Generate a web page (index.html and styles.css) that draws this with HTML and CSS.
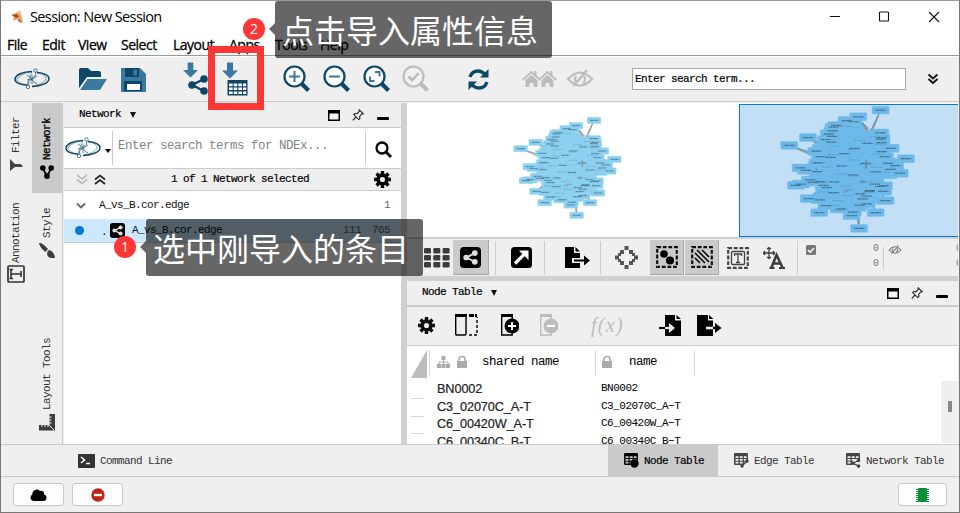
FILE: index.html
```html
<!DOCTYPE html>
<html lang="zh-CN">
<head>
<meta charset="utf-8">
<title>Session: New Session</title>
<link rel="stylesheet" href="styles.css">
</head>
<body>
<svg class="defs" width="0" height="0">
  <symbol id="logo" viewBox="0 0 36 22">
    <g fill="none" stroke="#0d4668">
      <path d="M18 3.4C9 3.5 1 7 1 11.500 1 14.500 6 17 13 17" stroke-width="1.500"/>
      <path d="M13 17Q3 15 3 11.500C4 7 12 5 18 3.400Z" stroke-width=".5"/>
      <path d="M23 4.600C30 5 35 7.500 35 10.500 35 15 27 18.500 18 18.400" stroke-width="1.500"/>
      <path d="M23 4.600Q32 7 32 10.500C31 15 24 17 18 18.400" stroke-width=".5"/>
      <circle cx="21.500" cy="2.500" r="1.700" stroke-width=".7"/><circle cx="14" cy="19" r="1.700" stroke-width=".7"/>
      <path d="M21.700 4v3l-4 4-3 3v3M13 7l3 2 5 6 2 1M13 12l5-1 5-3M18 7v9" stroke-width=".7"/>
    </g>
  </symbol>
  <symbol id="lens" viewBox="0 0 28 28">
    <circle cx="11.500" cy="11.500" r="10" fill="var(--lens,#fff)" stroke="currentColor" stroke-width="2.200"/>
    <path d="M19 19l6.500 6.500" stroke="currentColor" stroke-width="4.200"/>
  </symbol>
  <symbol id="down" viewBox="0 0 16 16"><path d="M5 0h6v8h5l-8 8-8-8h5z" fill="#39789f"/></symbol>
  <symbol id="share" viewBox="0 0 20 20">
    <path d="M16 4L4 10l12 6" fill="none" stroke="currentColor" stroke-width="2.500"/>
    <circle cx="16" cy="4" r="3.800"/><circle cx="4" cy="10" r="3.800"/><circle cx="16" cy="16" r="3.800"/>
  </symbol>
  <symbol id="sharebox" viewBox="0 0 22 22">
    <rect width="22" height="22" rx="4"/><path d="M16 6L7 11l9 5" fill="none" stroke="#ddd" stroke-width="2"/>
    <g fill="#ddd"><circle cx="15.500" cy="6.500" r="3"/><circle cx="6.500" cy="11" r="3"/><circle cx="15.500" cy="15.500" r="3"/></g>
  </symbol>
  <symbol id="eye" viewBox="0 0 28 20">
    <path d="M2 10Q14-3 26 10 14 23 2 10zM7.500 17L21 1M10 7a5 5 0 0 0 0 6M18 7a5 5 0 0 1-1 7" fill="none" stroke="currentColor" stroke-width="2.200"/>
  </symbol>
  <symbol id="gear" viewBox="0 0 18 18">
    <path d="M9 0v18M0 9h18M2.700 2.700l12.600 12.600M2.700 15.300L15.300 2.700" stroke="currentColor" stroke-width="3.600"/>
    <circle cx="9" cy="9" r="4.600" fill="none" stroke="currentColor" stroke-width="3.800"/>
    <circle cx="9" cy="9" r="2.700" fill="#efefef"/>
  </symbol>
  <symbol id="max" viewBox="0 0 12 11"><path d="M0 0h12v11H0z"/><path d="M1.500 3.500h9v6h-9z" fill="#f4f4f4"/></symbol>
  <symbol id="pin" viewBox="0 0 12 12"><path d="M7.300.8l4 4-1.600.2-2 2.200.2 2.300-1.200 1.100-5-5 1.200-1 2.200.1L7.200 2.500zM4.200 8L.7 11.400" fill="none" stroke="#222" stroke-width="1.100"/></symbol>
  <symbol id="lock" viewBox="0 0 10 12"><path d="M0 5h10v7H0z"/><path d="M2 6V3.500a3 3 0 0 1 6 0V6" fill="none" stroke="#aaa" stroke-width="1.700"/></symbol>
  <symbol id="table" viewBox="0 0 14 12"><rect width="14" height="12" rx="1.200"/><path d="M1.500 3.200h3v1.800h-3zM5.700 3.200h3v1.800h-3zM9.900 3.200h2.700v1.800H9.900zM1.500 6h3v1.800h-3zM5.700 6h3v1.800h-3zM9.900 6h2.700v1.800H9.900zM1.500 8.800h3v1.800h-3zM5.700 8.800h3v1.800h-3zM9.900 8.800h2.700v1.800H9.900z" fill="var(--cell,#efefef)"/></symbol>
  <symbol id="dashbox" viewBox="0 0 22 22"><path d="M1.200 1.200h19.600v19.600H1.200z" fill="none" stroke="currentColor" stroke-width="2.200" stroke-dasharray="3.800 1.800"/></symbol>
</svg>

<div class="window">
  <header class="titlebar">
    <svg width="13" height="14" viewBox="0 0 13 14"><path d="M1 5l5-2 4-3 1 5 2 8-4-2-2-2-4 2 1-4z" fill="#e8a05c"/><path d="M2 5l5-1 2 3-3 1zM9 9l3 4-4-2z" fill="#a34e2d"/><path d="M7 3l3-2v4z" fill="#f5cf92"/></svg>
    <span class="title">Session: New Session</span>
    <svg class="controls" width="114" height="14" viewBox="0 0 114 14" fill="none" stroke="#111" stroke-width="1.100"><path d="M0 6.500h10M99 2l10 10M109 2L99 12"/><rect x="49.500" y="2" width="9" height="9" rx=".6"/></svg>
  </header>
  <nav class="menu"><span>File</span><span>Edit</span><span>View</span><span>Select</span><span>Layout</span><span>Apps</span><span>Tools</span><span>Help</span></nav>

  <div class="toolbar">
    <svg width="36" height="22"><use href="#logo"/></svg>
    <svg width="28" height="22" viewBox="0 0 28 22"><path d="M0 20V2q0-2 2-2h7l3 3h8q2 0 2 2v4H8z" fill="#0d4668"/><path d="M8.500 11H28l-6 9.500Q21 22 19.500 22H1z" fill="#39789f"/></svg>
    <svg width="25" height="25" viewBox="0 0 25 25"><path d="M0 1h19l6 6v18H1q-1 0-1-1z" fill="#39789f"/><path d="M4 1h14v9H4zM3 14h18v10H3z" fill="#0d4668"/><path d="M12.500 2.500h3.500v6h-3.500z" fill="#39789f"/><path d="M6 17h13v6H6z" fill="#fff"/></svg>
    <svg width="25" height="34" viewBox="0 0 25 34"><use href="#down" x="0" y="0" width="15" height="16"/><g fill="#0d4668" color="#0d4668"><use href="#share" x="5" y="13" width="20" height="20"/></g></svg>
    <svg width="26" height="34" viewBox="0 0 26 34"><use href="#down" x="0" y="0" width="16" height="17"/><path d="M5.500 18h20v15.500h-20z" fill="#0d4668"/><path d="M7 21.500h3.600v2.800H7zM11.700 21.500h3.600v2.800h-3.600zM16.400 21.500h3.600v2.800h-3.600zM21 21.500h3.200v2.800H21zM7 25.500h3.600v2.600H7zM11.700 25.500h3.600v2.600h-3.600zM16.400 25.500h3.600v2.600h-3.600zM21 25.500h3.200v2.600H21zM7 29.400h3.600V32H7zM11.700 29.400h3.600V32h-3.600zM16.400 29.400h3.600V32h-3.600zM21 29.400h3.200V32H21z" fill="#fff"/></svg>
    <svg class="navy" width="28" height="28"><use href="#lens"/><path d="M6 11.500h11M11.500 6v11" stroke="#39789f" stroke-width="2"/></svg>
    <svg class="navy" width="28" height="28"><use href="#lens"/><path d="M6 11.500h11" stroke="#39789f" stroke-width="2"/></svg>
    <svg class="navy" width="28" height="28"><use href="#lens"/><path d="M12 7h4.500v4.500M7 11.500V16h4.500" fill="none" stroke="#39789f" stroke-width="1.900"/></svg>
    <svg class="faded" width="28" height="28"><use href="#lens"/><path d="M6.500 11.500l3.700 3.700 6.500-7" fill="none" stroke="#bdbdbd" stroke-width="2.600"/></svg>
    <svg width="21" height="21" viewBox="0 0 21 21" fill="none" stroke="#0d4668" stroke-width="3.300"><path d="M2 8Q4 2 10 2q4 0 7.500 4M19 13q-2 6-8 6-4.500 0-7.500-4"/><path d="M20.500 0v8.500H12zM.5 21v-8.500H9z" fill="#0d4668" stroke="none"/></svg>
    <svg width="35" height="18" viewBox="0 0 35 18" fill="none" stroke="#bdbdbd" stroke-width="2"><path d="M.7 10L9.500 2l8 7.500 8-7.500 8.800 8M13.500 1v4M29.500 1v4"/><path d="M3.500 10.300l6-5.500 6 5.500V17h-4v-4h-4v4h-4zM19.500 10.300l6-5.500 6 5.500V17h-4v-4h-4v4h-4z" fill="#bdbdbd" stroke="none"/></svg>
    <svg class="faded" width="28" height="20"><use href="#eye"/></svg>
    <div class="search">Enter search term...</div>
    <svg width="12" height="12" viewBox="0 0 12 12" fill="none" stroke="#111" stroke-width="1.800"><path d="M1.500 1.500L6 5.500l4.500-4M1.500 6L6 10l4.500-4"/></svg>
  </div>

  <main class="main">
    <aside class="rail">
      <div class="rail-a">
        <div class="vtab filter"><span>Filter</span><svg width="13" height="13" viewBox="0 0 13 13" fill="#444"><path d="M0 0v12l5-4h8L11 5H5z"/></svg></div>
        <div class="vtab annot"><span>Annotation</span><svg width="18" height="18" viewBox="0 0 18 18" fill="none" stroke="#333"><rect x="1" y="1" width="16" height="16" rx="1" stroke-width="1.700"/><path d="M4 4v10M4 9h10M14 6v6M2.500 4.500H6M2.500 13.500H6" stroke-width="1.600"/></svg></div>
      </div>
      <div class="rail-b">
        <div class="vtab network"><span>Network</span><svg width="14" height="14" viewBox="0 0 14 14"><path d="M2.500 3L7 11l4.500-8" fill="none" stroke="#000" stroke-width="1.700"/><circle cx="2.800" cy="3" r="2.800"/><circle cx="11.200" cy="3" r="2.800"/><circle cx="7" cy="11" r="2.900"/></svg></div>
        <div class="vtab style"><span>Style</span><svg width="16" height="15" viewBox="0 0 16 15" fill="#3c3c3c"><path d="M0 0q3-1 9 6L6.500 9Q1 5 0 0z"/><path d="M10 7q5 1 6 8-7 1-8-4 0-3 2-4z"/></svg></div>
        <div class="vtab layout"><span>Layout Tools</span><svg width="16" height="17" viewBox="0 0 16 17"><path d="M10.500 0H16v16.500H0V11h10.500z" fill="#3c3c3c"/><path d="M10 3h2.500M10 6h2.500M10 9h2.500M3 10.500V13M6 10.500V13M9 10.500V13M10 11l5 5" stroke="#efefef"/></svg></div>
      </div>
    </aside>

    <section class="netpanel">
      <div class="panel-head"><b>Network</b><i class="caret"></i><svg class="push" width="12" height="11"><use href="#max"/></svg><svg width="12" height="12"><use href="#pin"/></svg><i class="min"></i></div>
      <div class="ndex">
        <svg width="36" height="22"><use href="#logo"/></svg><i class="mini-caret"></i>
        <div class="ndex-input">Enter search terms for NDEx...</div>
        <svg class="glass" width="17" height="17" viewBox="0 0 17 17" fill="none" stroke="#000" stroke-width="2.300"><circle cx="7" cy="7" r="5.500"/><path d="M11 11l5 5" stroke-width="2.800"/></svg>
      </div>
      <div class="selbar">
        <svg width="30" height="11" viewBox="0 0 30 11" fill="none" stroke-width="1.700"><path d="M1 1l5 4 5-4M1 5.500l5 4 5-4" stroke="#bbb"/><path d="M19 5.500l5-4 5 4M19 10l5-4 5 4" stroke="#222"/></svg>
        <span>1 of 1 Network selected</span><svg class="gear" width="17" height="17"><use href="#gear"/></svg>
      </div>
      <div class="tree-root"><svg width="10" height="7" viewBox="0 0 10 7"><path d="M1 1.500l4 4 4-4" fill="none" stroke="#666" stroke-width="1.900"/></svg><span>A_vs_B.cor.edge</span><em>1</em></div>
      <div class="tree-item"><i class="dot"></i><span class="tick">.</span><svg width="15" height="15"><use href="#sharebox"/></svg><span class="name">A_vs_B.cor.edge</span><em>111</em><em class="edges">765</em></div>
      <div class="empty"></div>
    </section>

    <section class="right">
      <div class="view">
        <svg class="graph" id="graph" viewBox="30 40 350 325"></svg>
        <div class="birdseye"><svg class="graph-big" id="overview" viewBox="30 40 350 325"></svg></div>
      </div>
      <div class="viewbar">
        <svg width="26" height="20" viewBox="0 0 26 20" fill="#3c3c3c"><g id="gridrow"><rect width="7" height="5.500" rx="1.200"/><rect x="9.300" width="7" height="5.500" rx="1.200"/><rect x="18.600" width="7" height="5.500" rx="1.200"/></g><use href="#gridrow" y="7"/><use href="#gridrow" y="14"/></svg>
        <div class="on first"><svg width="21" height="21"><use href="#sharebox"/></svg></div>
        <i class="sep"></i>
        <svg width="21" height="21" viewBox="0 0 21 21"><rect width="21" height="21" rx="3.500"/><path d="M4 16.500L14 6.500" stroke="#fff" stroke-width="3.200"/><path d="M8 3.500h9.500V13z" fill="#fff"/></svg>
        <i class="sep"></i>
        <svg class="export" width="25" height="21" viewBox="0 0 25 21"><path d="M0 0h9v6h6v15H0zM10.500 0L15 4.500h-4.500z"/><path d="M7 13.500h13" stroke="#efefef" stroke-width="5"/><path d="M9 13.500h11" stroke="#000" stroke-width="2"/><path d="M19 8.500l6 5-6 5z"/></svg>
        <i class="sep"></i>
        <svg class="diamond" width="23" height="23" viewBox="0 0 23 23" fill="#555"><path d="M9.500 0h4v4h-4zM9.500 19h4v4h-4zM0 9.500h4v4H0zM19 9.500h4v4h-4zM5 4h4v4H5zM14 4h4v4h-4zM5 15h4v4H5zM14 15h4v4h-4zM3 7h3v3H3zM17 7h3v3h-3zM3 13h3v3H3zM17 13h3v3h-3z"/></svg>
        <div class="on"><svg width="22" height="22"><use href="#dashbox"/><circle cx="8" cy="8" r="3.800"/><circle cx="14" cy="14.500" r="4"/></svg></div>
        <div class="on"><svg width="22" height="22"><use href="#dashbox"/><path d="M4 7l10 10M6 4l12 12M11 4l7 7M4 12l5 5" stroke="#000" stroke-width="1.500"/></svg></div>
        <svg class="grey" width="22" height="22"><use href="#dashbox"/><rect x="4.500" y="4.500" width="13" height="13" rx="1" fill="none" stroke="#444" stroke-width="1.300"/><path d="M7.500 9V7h7v2M11 7v8.500M9 15.500h4" fill="none" stroke="#444" stroke-width="1.300"/></svg>
        <svg width="22" height="22" viewBox="0 0 22 22" fill="none" stroke="#3c3c3c"><path d="M6 0v12M0 6h12M4 2l2-1.500L8 2M4 10l2 1.500L8 10M2 4L.5 6 2 8M10 4l1.500 2L10 8" stroke-width="1.300"/><path d="M8.500 20.500L13.500 8l6 12.500M10.500 16.500h7" stroke-width="2.600"/><path d="M6.500 21h5M16 21h6" stroke-width="2"/></svg>
        <i class="sep"></i>
        <svg class="check" width="10" height="10" viewBox="0 0 10 10"><rect width="10" height="10" rx="1.500" fill="#777"/><path d="M2 5l2.200 2.200L8 3" fill="none" stroke="#fff" stroke-width="1.500"/></svg>
        <div class="counts"><span>0</span><span>0</span></div>
        <i class="sep short"></i>
        <svg class="hidden-eye" width="14" height="10"><use href="#eye"/></svg>
        <div class="counts cut"><span>0</span><span>0</span></div>
      </div>
      <div class="panel-head tablehead"><b>Node Table</b><i class="caret"></i><svg class="push" width="12" height="11"><use href="#max"/></svg><svg width="12" height="12"><use href="#pin"/></svg><i class="min"></i></div>
      <div class="tablebar">
        <svg width="17" height="17"><use href="#gear"/></svg>
        <svg width="23" height="22" viewBox="0 0 23 22" fill="none" stroke="#000"><rect x=".7" y=".7" width="10.300" height="20.300" rx="1" stroke-width="1.400"/><path d="M0 1.500h22" stroke-width="3" stroke-dasharray="12 2 5 1"/><path d="M14 21h8V3" stroke-width="1.400" stroke-dasharray="3 2"/></svg>
        <svg width="18" height="22" viewBox="0 0 18 22"><path d="M.7.7h10.500V21H.7z" fill="none" stroke="#000" stroke-width="1.400"/><path d="M0 0h12v3H0z"/><circle cx="11" cy="12" r="7.500"/><path d="M7 12h8M11 8v8" stroke="#fff" stroke-width="1.900"/></svg>
        <svg width="18" height="22" viewBox="0 0 18 22" fill="#bdbdbd"><path d="M.7.7h10.500V21H.7z" fill="none" stroke="#bdbdbd" stroke-width="1.400"/><path d="M0 0h12v3H0z"/><circle cx="11" cy="12" r="7.500"/><path d="M7 12h8" stroke="#fff" stroke-width="1.900"/></svg>
        <span class="fx">f(x)</span>
        <svg width="22" height="21" viewBox="0 0 22 21"><path d="M6 0h10v5.500h6V21H6zM17.500 0L22 4h-4.500z"/><path d="M6 13h5" stroke="#efefef" stroke-width="2.200"/><path d="M0 13h6" stroke="#000" stroke-width="2.200"/><path d="M10 8l6 5-6 5z" fill="#efefef"/></svg>
        <svg width="25" height="21" viewBox="0 0 25 21"><path d="M0 0h11v5.500h5V21H0zM12 0l4.500 4H12z"/><path d="M9 13h8" stroke="#efefef" stroke-width="2.600"/><path d="M16 13h4" stroke="#000" stroke-width="2.400"/><path d="M18 8l6.500 5-6.500 5z"/></svg>
      </div>
      <div class="table">
        <div class="thead">
          <i class="corner"></i>
          <div class="th shared"><svg width="13" height="12" viewBox="0 0 13 12" fill="#aaa"><path d="M4.500 0h4v4h-4zM0 8h4v4H0zM4.500 8h4v4h-4zM9 8h4v4H9z"/><path d="M6.500 3v6M2 9V6h9v3" fill="none" stroke="#aaa"/></svg><svg class="lock" width="10" height="12"><use href="#lock"/></svg><span>shared name</span></div>
          <div class="th plain"><svg class="lock" width="10" height="12"><use href="#lock"/></svg><span>name</span></div>
        </div>
        <div class="rows">
          <div class="row"><i></i><span>BN0002</span><code>BN0002</code></div>
          <div class="row"><i></i><span>C3_02070C_A-T</span><code>C3_02070C_A−T</code></div>
          <div class="row"><i></i><span>C6_00420W_A-T</span><code>C6_00420W_A−T</code></div>
          <div class="row"><i></i><span>C6_00340C_B-T</span><code>C6_00340C_B−T</code></div>
        </div>
        <div class="scroll"><i></i></div>
      </div>
    </section>
  </main>

  <div class="dock">
    <div class="dtab cmd"><svg width="17" height="14" viewBox="0 0 17 14"><rect width="17" height="14" rx=".8" fill="#333"/><path d="M3 3l3.500 3L3 9M8 9.500h4" fill="none" stroke="#fff" stroke-width="1.500"/></svg><span>Command Line</span></div>
    <div class="dtab node"><svg width="15" height="15" viewBox="0 0 15 15"><use href="#table" width="14" height="12"/><circle cx="10.500" cy="10.500" r="4.200"/></svg><b>Node Table</b></div>
    <div class="dtab edge-tab"><svg width="15" height="15" viewBox="0 0 15 15" fill="#444"><use href="#table" width="14" height="12"/><path d="M6 15L15 6v9z" fill="#efefef"/><path d="M8 13l5-5" stroke="#444" stroke-width="1.500"/><circle cx="8" cy="13" r="1.700"/><circle cx="13" cy="8" r="1.700"/></svg><span>Edge Table</span></div>
    <div class="dtab net"><svg width="15" height="15" viewBox="0 0 15 15" fill="#444" color="#444"><use href="#table" width="14" height="12"/><path d="M5 15l3-9h7v9z" fill="#efefef"/><use href="#share" x="5" y="5.500" width="9.500" height="9.500"/></svg><span>Network Table</span></div>
  </div>
  <footer class="status">
    <div class="btn"><svg width="17" height="12" viewBox="0 0 17 12"><path d="M3.500 12A3.500 3.500 0 0 1 2.300 5.500 4.500 4.500 0 0 1 10 2a3 3 0 0 1 4 3.500A3.300 3.300 0 0 1 13.500 12z"/></svg></div>
    <div class="btn second"><svg width="14" height="14" viewBox="0 0 14 14"><circle cx="7" cy="7" r="6.700" fill="#bf2611"/><path d="M3 7h8" stroke="#fff" stroke-width="2.400"/></svg></div>
    <div class="btn mem"><svg width="13" height="14" viewBox="0 0 13 14"><path d="M1 1v13M12 1v13" stroke="#0a9036" stroke-width="2" stroke-dasharray="1 1"/><rect x="2" width="9" height="14" rx="1" fill="#0a9036"/></svg></div>
  </footer>

  <div class="highlight"></div>
  <div class="badge b2">2</div>
  <div class="tip t2">点击导入属性信息</div>
  <div class="badge b1">1</div>
  <div class="tip t1">选中刚导入的条目</div>
</div>
<script src="graph.js"></script>
</body>
</html>
```
FILE: styles.css
```css
* { box-sizing: border-box; }
body { margin: 0; font: 11px/14px "Liberation Mono", "Noto Sans CJK SC", monospace; letter-spacing: -.6px; color: #111; overflow: hidden; }
svg { display: block; flex: none; }
i { display: block; font-style: normal; flex: none; }
b { font-weight: 400; }
.defs { position: absolute; }
.window { position: relative; width: 960px; height: 513px; background: #fff; display: flex; flex-direction: column; border: 1px solid #777; border-top-color: #999; overflow: hidden; }
.titlebar { height: 35px; padding: 0 10px 4px 9px; display: flex; align-items: center; font: 14.500px/20px "Open Sans", sans-serif; letter-spacing: -.62px; color: #000; }
.title { margin-left: 7px; }
.controls { margin-left: auto; margin-right: 5px; }
.menu { height: 20px; padding-left: 6px; display: grid; grid-template-columns: 35px 36px 43px 52px 56px 46px 45px 40px; font: 500 14px/18px "Open Sans", sans-serif; letter-spacing: -.5px; color: #000; -webkit-text-stroke: .3px #000; border-bottom: 1px solid #999; }
.toolbar { height: 45px; padding: 0 0 0 13px; margin-top: 1px; display: grid; grid-template-columns: 65px 42px 62px 39px 61px 40px 40px 39px 66px 54px 44px 66px 295px 20px; align-items: center; background: #efefef; border-bottom: 1px solid #ccc; flex: none; }
.navy { color: #0d4668; }
.faded { color: #bdbdbd; --lens: #f1f1f1; }
.search { width: 274px; height: 22px; border: 1px solid #a7a7ae; background: #fff; padding-left: 2px; line-height: 20px; color: #000; -webkit-text-stroke: .2px #000; }
.main { height: 342px; padding-top: 1px; display: flex; background: #efefef; flex: none; }
.rail { width: 62px; display: flex; border-right: 1px solid #ccc; }
.rail-a, .rail-b { width: 31px; display: flex; flex-direction: column; }
.vtab { display: flex; flex-direction: column; align-items: center; color: #333; }
.vtab span { writing-mode: vertical-rl; transform: rotate(180deg); }
.filter { margin-top: 14px; height: 86px; }
.filter svg { margin-top: 6px; }
.annot svg { margin-top: 2px; }
.network { height: 90px; background: #cacaca; padding-top: 15px; color: #000; -webkit-text-stroke: .3px #000; }
.network svg { margin-top: 5px; }
.style { margin-top: 15px; height: 130px; }
.style svg { margin-top: 5px; }
.layout svg { margin-top: 4px; }
.netpanel { width: 338px; margin-left: 1px; display: flex; flex-direction: column; }
.panel-head { height: 25px; padding: 0 13px 0 15px; display: flex; align-items: center; border-bottom: 1px solid #ccc; }
.panel-head b { color: #000; padding-bottom: 2px; -webkit-text-stroke: .2px #000; }
.caret { margin-left: 9px; border: 3.500px solid transparent; border-top: 6px solid #111; border-bottom: 0; }
.push { margin-left: auto; }
.panel-head .push + svg { margin-left: 12px; }
.min { width: 12px; height: 3px; margin: 7px -1px 0 13px; background: #000; border-radius: 1px; }
.ndex { height: 41px; background: #fff; display: flex; align-items: center; border-bottom: 1px solid #ccc; }
.ndex > svg:first-child { margin: -1px 0 0 1px; }
.mini-caret { margin: 5px 1px 0 4px; border: 3px solid transparent; border-top: 4px solid #000; border-bottom: 0; }
.ndex-input { height: 34px; width: 254px; padding-left: 5px; line-height: 31px; font-size: 12.500px; letter-spacing: -.5px; color: #858585; border: solid #ccc; border-width: 0 1px; }
.glass { margin: 2px 0 0 9px; }
.selbar { height: 22px; display: flex; align-items: center; padding-left: 12px; border-bottom: 1px solid #ccc; color: #000; }
.selbar span { margin: -2px 0 0 65px; -webkit-text-stroke: .2px #000; }
.gear { margin-left: auto; margin-right: 10px; }
.tree-root, .tree-item { display: flex; align-items: center; background: #fff; }
.tree-root { height: 28px; padding: 0 11px 0 12px; }
.tree-root span { margin-left: 13px; }
em { font-style: normal; color: #666; margin-left: auto; }
.tree-item { height: 24px; background: #cce8ff; padding: 0 11px 1px 11px; border-bottom: 1px solid #ccc; }
.dot { width: 9px; height: 9px; border-radius: 50%; background: #0078d7; }
.tick { margin: 4px 3px 0 17px; }
.name { margin-left: 7px; }
.tree-item .edges { margin-left: 11px; }
.empty { flex: 1; background: #fff; }
.right { width: 558px; border-left: 6px solid #d0d0d0; display: flex; flex-direction: column; padding-right: 1px; }
.view { height: 134px; background: #fff; display: flex; justify-content: space-between; flex: none; }
.graph { width: 116.700px; height: 108.300px; margin: 10px 0 0 103px; }
.birdseye { width: 219px; height: 133px; margin-top: 1px; border: 1px solid #0078d7; border-right: 0; background: #c3dff5; }
.graph-big { width: 145.300px; height: 134.900px; margin: -4px 0 0 36px; }
.view .edge { stroke: #8a8a8a; stroke-width: 2; fill: none; }
.view .body { fill: #89cff0; stroke: #a0d8f3; stroke-width: 1; }
.view .label { fill: none; stroke: #304350; stroke-width: 3; stroke-dasharray: 3 .8 5 1.200 2 .6; opacity: .65; }
.view .streak { fill: none; stroke: #4c7184; stroke-width: 2; stroke-dasharray: 4 2 2 3; opacity: .6; }
.birdseye .body { fill: #6bb9ea; stroke: #79c1ed; }
.birdseye .edge { stroke: #6d8498; }
.viewbar { height: 39px; padding-left: 17px; border-top: 2px solid #d0d0d0; display: flex; align-items: center; flex: none; overflow: hidden; }
.on { width: 34px; height: 35px; background: #cacaca; border-right: 1px solid #a9a9a9; border-bottom: 1px solid #a9a9a9; display: flex; align-items: center; justify-content: center; flex: none; }
.sep { width: 1px; height: 34px; background: #ccc; margin: 0 15px 0 6px; flex: none; }
.viewbar > svg + .sep { margin-left: 12px; }
.viewbar > svg + .sep + svg { margin-left: 3px; }
.viewbar > svg + .on { margin-left: 12px; }
.viewbar > svg + .on.first { width: 36px; margin-left: 3px; }
.viewbar > .sep + svg.export { margin: 0 -2px 0 5px; }
.viewbar > .sep + svg.diamond { margin-left: -1px; }
.on + .on { margin-left: 1px; }
.grey { color: #444; margin-left: 8px; }
.grey + svg { margin-left: 14px; }
.viewbar > .sep + svg.check { margin: -16px 0 0 -7px; }
.counts { display: flex; flex-direction: column; margin-left: 57px; line-height: 15px; color: #85786c; font-size: 10px; letter-spacing: 0; padding-bottom: 3px; flex: none; }
.sep.short { height: 22px; margin: 0 4px; }
.hidden-eye { color: #777; margin-top: -16px; }
.counts.cut { margin-left: 54px; }
.tablehead { height: 31px; border-top: 5px solid #d0d0d0; border-bottom-width: 2px; flex: none; padding-right: 11px; }
.tablebar { height: 39px; padding-left: 11px; display: grid; grid-template-columns: 37px 46px 39px 51px 68px 38px 30px; align-items: center; border-bottom: 1px solid #ccc; flex: none; padding-bottom: 2px; }
.fx { font: italic 20px/22px "Liberation Serif", serif; letter-spacing: 1.300px; color: #bdbdbd; }
.table { flex: 1; min-height: 0; background: #fff; position: relative; padding: 4px 0 0 4px; overflow: hidden; }
.thead { display: flex; height: 30px; font-size: 12.500px; letter-spacing: -.5px; color: #000; }
.corner { width: 16px; height: 28px; background: #bdbdbd; clip-path: polygon(100% 0, 100% 100%, 0 100%); margin-right: 2px; }
.th { display: flex; align-items: center; height: 25px; border-right: 1px solid #d6d6d6; padding-bottom: 2px; }
.shared { width: 167px; border-left: 1px solid #d6d6d6; padding-left: 7px; }
.lock { fill: #aaa; }
.shared .lock { margin: 1px 15px 0 7px; }
.plain { width: 99px; padding-left: 6px; }
.plain .lock { margin-right: 17px; }
.row { height: 17.700px; display: flex; color: #222; line-height: 17px; }
.row i { width: 13px; height: 1px; margin: 18px 13px 0 0; background: #d6d6d6; }
.row span { width: 164px; font: 12.700px/18px "Liberation Sans", sans-serif; letter-spacing: -.1px; -webkit-text-stroke: .2px #222; }
.row code { font-family: inherit; color: #000; letter-spacing: -.5px; }
.scroll { position: absolute; right: 0; top: 35px; bottom: 1px; width: 17px; background: #efefef; }
.scroll i { width: 4px; height: 11px; margin: 20px 0 0 7px; background: #888; }
.dock { height: 33px; border: solid #ccc; border-width: 1px 0; background: #efefef; display: flex; flex: none; }
.dtab { display: flex; align-items: center; gap: 5px; color: #333; white-space: nowrap; }
.cmd { padding-left: 77px; width: 607px; }
.node { width: 110px; padding-left: 16px; background: #cacaca; color: #000; --cell: #cacaca; -webkit-text-stroke: .2px #000; }
.edge-tab { width: 112px; padding-left: 16px; }
.net { padding-left: 16px; }
.status { flex: 1; background: #efefef; display: flex; padding: 6px 12px 0 12px; }
.btn { width: 51px; height: 23px; border: 1px solid #c8c8c8; border-radius: 3px; background: #fdfdfd; display: flex; align-items: center; justify-content: center; }
.second { margin-left: 8px; }
.mem { width: 49px; margin-left: auto; }
.highlight { position: absolute; left: 207px; top: 45px; width: 56px; height: 64px; border: 7px solid #fd3636; }
.badge { position: absolute; width: 22px; height: 22px; border-radius: 50%; background: #fd3636; color: #fff; font: 14px/22px "Open Sans", sans-serif; letter-spacing: 0; text-align: center; }
.b2 { left: 242px; top: 17px; }
.b1 { left: 113px; top: 235px; }
.tip { position: absolute; width: 277px; height: 57px; padding-left: 7px; border-radius: 3px; background: rgba(0, 0, 0, .6); color: #fff; font: 32px/57px "Noto Sans CJK SC", sans-serif; letter-spacing: 0; white-space: nowrap; }
.tip::before { content: ""; position: absolute; left: -6px; top: 22px; border: 6px solid transparent; border-right-color: rgba(0, 0, 0, .6); border-left: 0; }
.t2 { left: 274px; top: 0; }
.t1 { left: 145px; top: 218px; }
```
FILE: graph.js
```js
// Outer nodes of the network, in graph coordinates.
const outer = [
  [282,62],[62,147],[107,128],[343,179],[328,214],[294,280],[270,309],[230,347],[134,309],[109,275],
  [78,243],[90,240],[89,201],[102,207],[228,78],[217,90],[175,99],[167,112],[163,139],[127,161],[137,174],
  [281,117],[284,128],[284,140],[306,154],[285,162],[317,196],[306,205],[300,190],[112,230],[118,236],
  [152,249],[137,234],[290,244],[288,258],[268,240],[248,269],[151,292],[135,278],[212,316],[215,308],
  [187,300],[232,291],[256,256],[169,261],[200,87],[165,125],[130,189]
];
const edges = [
  [282,62,257,116],[62,147,150,180],[107,128,165,160],[343,179,270,190],[230,347,226,300],
  [270,309,240,240],[294,280,260,230],[109,275,150,240],[328,214,250,200],[78,243,140,205],[134,309,190,270],
  [107,128,145,150],[109,275,130,255],[236,90,258,118],[228,78,252,122],[89,201,150,220]
];
let seed = 7;
const rand = () => (seed = (seed * 16807) % 2147483647) / 2147483647;

const inner = [];
for (let y = 100; y < 300; y += 11) {
  const half = Math.sqrt(Math.max(0, 1 - ((y - 198) / 112) ** 2)) * 82;
  for (let x = 215 - half; x < 217 + half; x += 27) {
    const nx = x + rand() * 12 - 6, ny = y + rand() * 6 - 3;
    if (nx > 222 && nx < 258 && ny < 118) continue;
    inner.push([Math.round(nx), Math.round(ny)]);
  }
}
let markup = '';
const tuft = edges.map(([a, b, c, d]) => `M${a} ${b}L${c} ${d}M${a} ${b}L${c + 5} ${d - 3}M${a} ${b}L${c - 3} ${d + 5}`).join('');
markup += `<path class="edge" d="${tuft}"/>`;
for (const [x, y] of inner.concat(outer)) {
  markup += `<rect class="body" x="${x - 20.5}" y="${y - 9.5}" width="41" height="19" rx="2"/>`;
}
markup += `<path class="label" d="${outer.map(([x, y]) => `M${x - 12} ${y}h25`).join('')}"/>`;
markup += `<path class="label" d="${inner.filter((n, i) => i % 5 === 0).map(([x, y]) => `M${x - 12} ${y}h25`).join('')}"/>`;
markup += `<path class="streak" d="${inner.filter((n, i) => i % 4 === 1).map(([x, y]) => `M${x - 14} ${y + 3}h26`).join('')}"/>`;
markup += '<path class="edge" d="M246 180v24M248 182v20M232 233h14M232 236h14M194 254v8M197 254h18M198 258h6M127 200v8"/>';

document.getElementById('graph').innerHTML = markup;
document.getElementById('overview').innerHTML = markup;
```
